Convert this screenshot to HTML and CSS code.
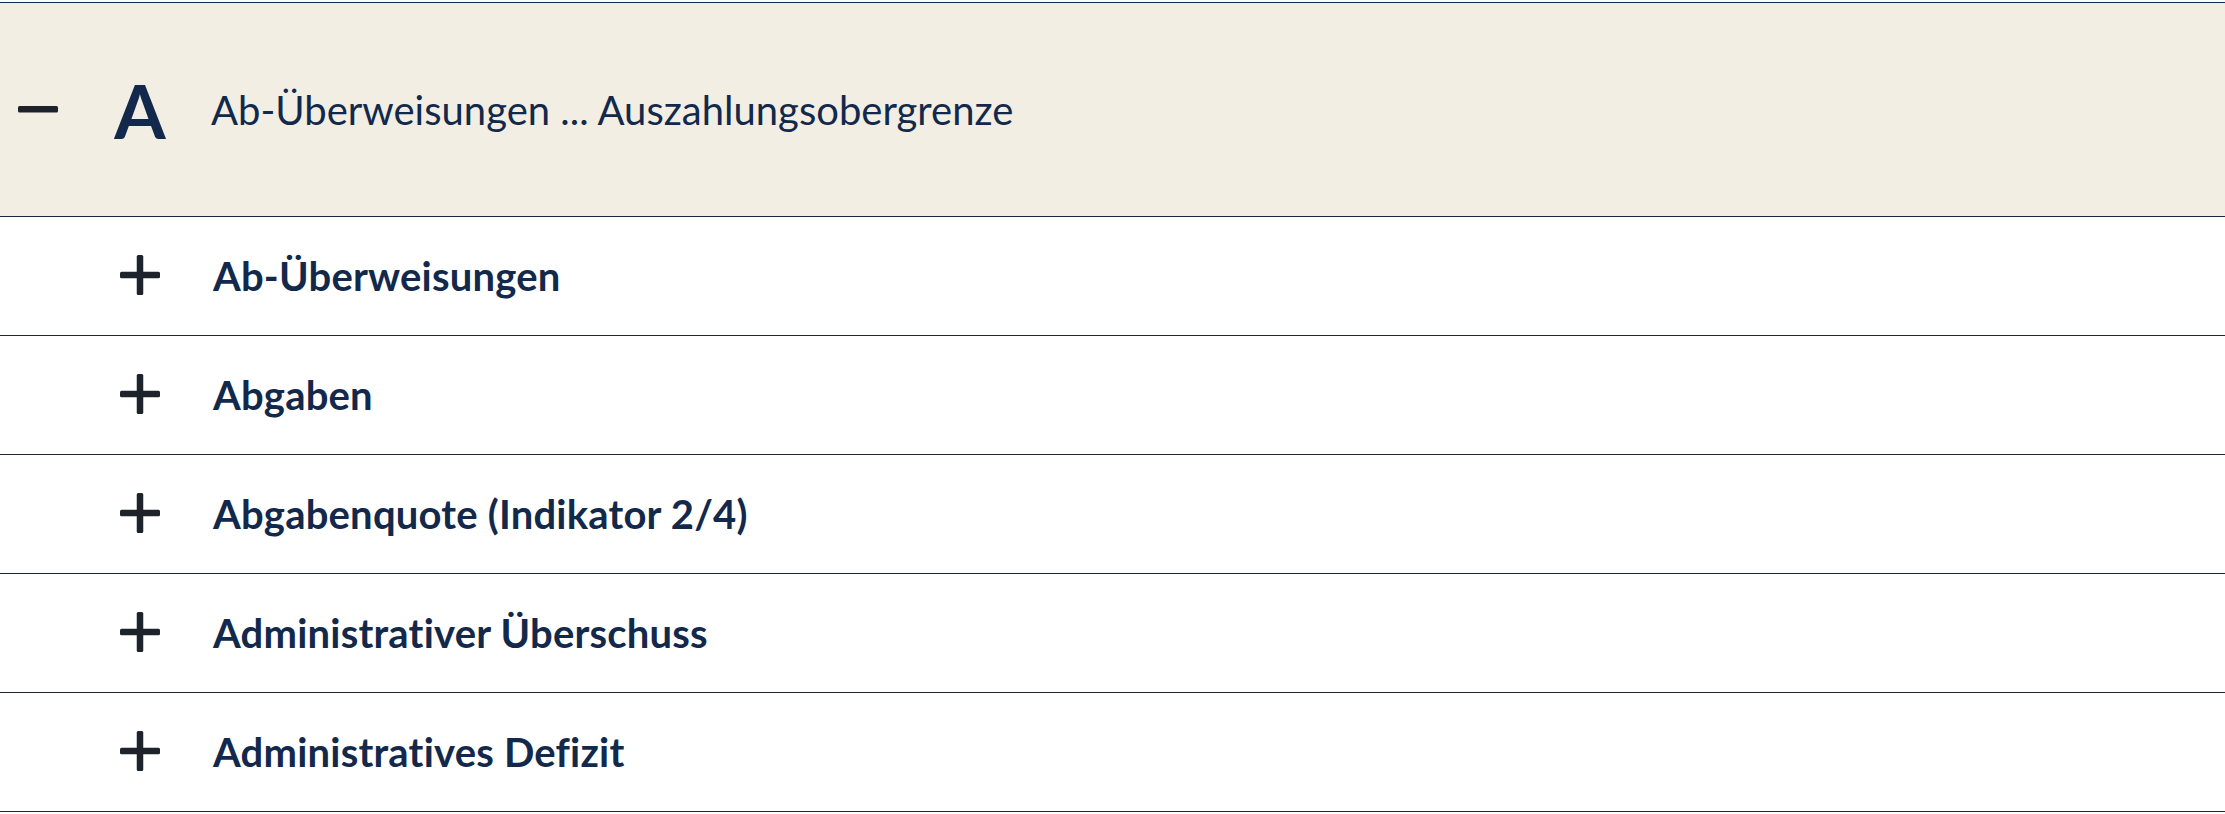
FILE: index.html
```html
<!DOCTYPE html>
<html lang="de">
<head>
<meta charset="utf-8">
<title>Glossar A</title>
<link rel="stylesheet" href="styles.css">
</head>
<body>
<div class="glossary">
  <div class="group-head">
    <span class="toggle">
      <svg class="icon" width="40" height="40" viewBox="0 0 40 40"><rect x="0" y="17" width="40" height="6.5" rx="1.5"/></svg>
    </span>
    <span class="letter">A</span>
    <span class="range">Ab-Überweisungen ... Auszahlungsobergrenze</span>
  </div>
  <div class="entry">
    <span class="toggle"></span>
    <span class="plus"><svg class="icon" width="40" height="40" viewBox="0 0 40 40"><rect x="0" y="16.75" width="40" height="6.5" rx="1.5"/><rect x="16.75" y="0" width="6.5" height="40" rx="1.5"/></svg></span>
    <span class="term">Ab-Überweisungen</span>
  </div>
  <div class="entry">
    <span class="toggle"></span>
    <span class="plus"><svg class="icon" width="40" height="40" viewBox="0 0 40 40"><rect x="0" y="16.75" width="40" height="6.5" rx="1.5"/><rect x="16.75" y="0" width="6.5" height="40" rx="1.5"/></svg></span>
    <span class="term">Abgaben</span>
  </div>
  <div class="entry">
    <span class="toggle"></span>
    <span class="plus"><svg class="icon" width="40" height="40" viewBox="0 0 40 40"><rect x="0" y="16.75" width="40" height="6.5" rx="1.5"/><rect x="16.75" y="0" width="6.5" height="40" rx="1.5"/></svg></span>
    <span class="term">Abgabenquote (Indikator 2/4)</span>
  </div>
  <div class="entry">
    <span class="toggle"></span>
    <span class="plus"><svg class="icon" width="40" height="40" viewBox="0 0 40 40"><rect x="0" y="16.75" width="40" height="6.5" rx="1.5"/><rect x="16.75" y="0" width="6.5" height="40" rx="1.5"/></svg></span>
    <span class="term">Administrativer Überschuss</span>
  </div>
  <div class="entry">
    <span class="toggle"></span>
    <span class="plus"><svg class="icon" width="40" height="40" viewBox="0 0 40 40"><rect x="0" y="16.75" width="40" height="6.5" rx="1.5"/><rect x="16.75" y="0" width="6.5" height="40" rx="1.5"/></svg></span>
    <span class="term">Administratives Defizit</span>
  </div>
</div>
</body>
</html>
```

FILE: styles.css
```css
html, body {
  margin: 0;
  padding: 0;
  background: #ffffff;
}

body {
  font-family: Lato, "Liberation Sans", sans-serif;
  color: #142a4b;
}

.glossary {
  padding-top: 2px;
}

.group-head {
  display: grid;
  grid-template-columns: 76px 128px 1fr;
  align-items: center;
  height: 213px;
  background: #f2eee3;
  border-top: 1px solid #14294a;
  border-bottom: 1px solid #14294a;
}

.entry {
  display: grid;
  grid-template-columns: 76px 128px 1fr;
  align-items: center;
  height: 118px;
  border-bottom: 1px solid #1c2738;
}

.toggle,
.plus {
  display: flex;
  justify-content: center;
  align-items: center;
}

.icon {
  display: block;
  fill: #1e222a;
}

.group-head .icon {
  margin-top: -2px;
}

.plus .icon {
  margin-top: -2px;
}

.letter {
  display: block;
  text-align: center;
  font-weight: 700;
  font-size: 74px;
  line-height: 1;
  color: #13294b;
  padding-top: 2px;
}

.range {
  padding-left: 7px;
  font-size: 40px;
  font-weight: 400;
  line-height: 1;
  color: #13294b;
}

.term {
  padding-left: 9px;
  font-size: 40px;
  font-weight: 700;
  letter-spacing: 0.2px;
  line-height: 1;
  color: #13294b;
}
```
